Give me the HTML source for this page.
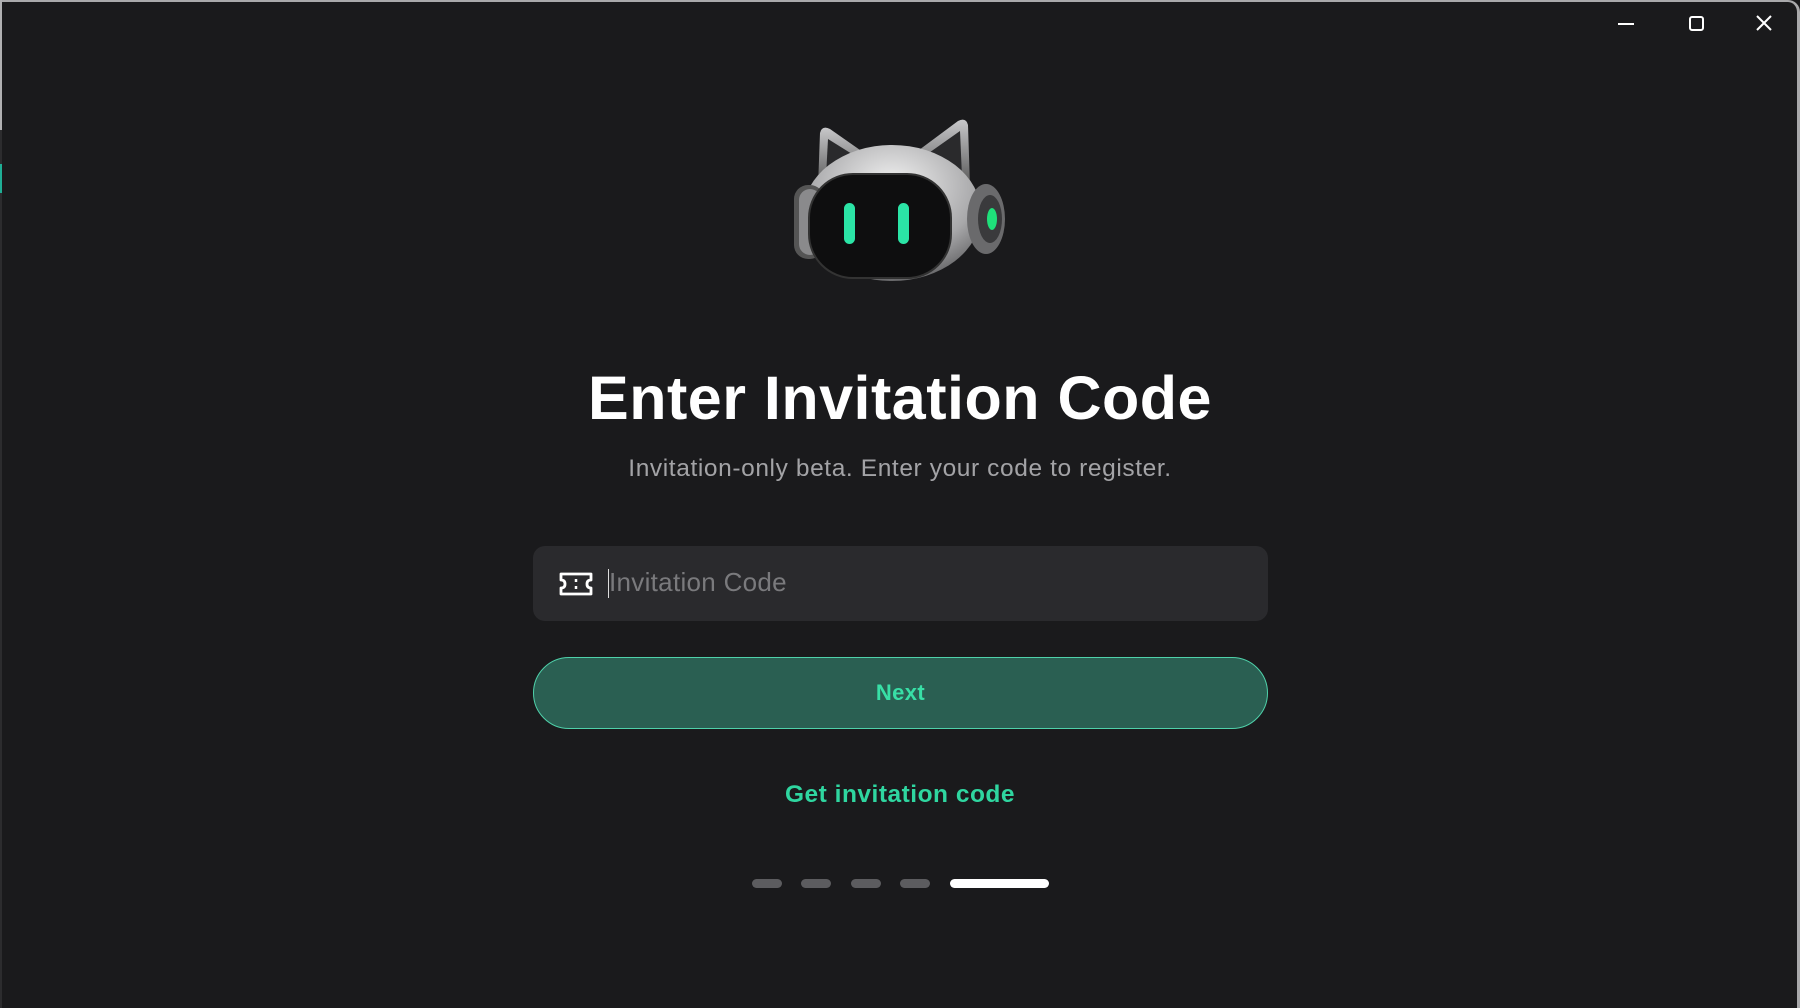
<!DOCTYPE html>
<html><head><meta charset="utf-8"><style>
*{margin:0;padding:0;box-sizing:border-box}
body{width:1800px;height:1008px;background:#1a1a1c;overflow:hidden;position:relative;font-family:"Liberation Sans",sans-serif}
.frame{position:absolute;inset:0;border-top:2px solid #a9a9ab;border-right:3px solid #a9a9ab;border-top-right-radius:12px}
.lstrip{position:absolute;left:0;top:0;width:2px;height:130px;background:#b0b0b2}
.lstrip2{position:absolute;left:0;top:130px;width:2px;height:878px;background:#2c2c2e}
.teal{position:absolute;left:0;top:164px;width:2px;height:29px;background:#1fae95}
h1{position:absolute;top:363px;left:0;width:1800px;text-align:center;color:#fff;font-size:61px;font-weight:bold;letter-spacing:0.5px}
.sub{position:absolute;top:455px;left:0;width:1800px;text-align:center;color:#a3a3a6;font-size:24.5px;letter-spacing:0.6px}
.inp{position:absolute;left:533px;top:546px;width:735px;height:75px;background:#2a2a2d;border-radius:12px}
.ph{position:absolute;left:609px;top:567px;color:#7a7a7d;font-size:26px;letter-spacing:0.3px}
.caret{position:absolute;left:608px;top:569px;width:1px;height:29px;background:#ddd}
.btn{position:absolute;left:533px;top:657px;width:735px;height:72px;background:#2a5f52;border:1.5px solid #4fd1aa;border-radius:36px;color:#38dfa6;font-weight:bold;font-size:22px;letter-spacing:0.4px;text-align:center;line-height:70px}
.link{position:absolute;top:781px;left:0;width:1800px;text-align:center;color:#2fd6a0;font-weight:bold;font-size:24.5px;letter-spacing:0.5px}
.dot{position:absolute;top:879px;height:9px;border-radius:5px;background:#5c5c5f}
</style></head><body>
<div class="frame"></div><div class="lstrip"></div><div class="lstrip2"></div><div class="teal"></div>
<svg style="position:absolute;left:1610px;top:10px" width="180" height="30">
<line x1="8" y1="14" x2="24" y2="14" stroke="#fff" stroke-width="2"/>
<rect x="80" y="7" width="13" height="13" rx="2" fill="none" stroke="#fff" stroke-width="2"/>
<path d="M147 6L161 20M161 6L147 20" stroke="#fff" stroke-width="2"/>
</svg>
<svg style="position:absolute;left:790px;top:115px" width="220" height="170" viewBox="0 0 220 170">
<defs>
<radialGradient id="h" cx="0.5" cy="0.3" r="0.8"><stop offset="0" stop-color="#f2f2f2"/><stop offset="0.6" stop-color="#a8a8aa"/><stop offset="1" stop-color="#4a4a4c"/></radialGradient>
<linearGradient id="e" x1="0" y1="0" x2="0" y2="1"><stop offset="0" stop-color="#c8c8ca"/><stop offset="1" stop-color="#555"/></linearGradient>
</defs>
<path d="M28 72 L30 18 Q32 10 40 14 L80 42 Z" fill="url(#e)"/>
<path d="M36 62 L38 24 L70 44 Z" fill="#2a2a2c"/>
<path d="M180 72 L178 10 Q176 2 168 6 L125 38 Z" fill="url(#e)"/>
<path d="M172 62 L170 16 L136 40 Z" fill="#2a2a2c"/>
<ellipse cx="102" cy="98" rx="89" ry="68" fill="url(#h)"/>
<rect x="4" y="70" width="30" height="74" rx="14" fill="#555"/>
<rect x="9" y="74" width="22" height="66" rx="11" fill="#8a8a8c"/>
<ellipse cx="196" cy="104" rx="19" ry="35" fill="#6a6a6c"/>
<ellipse cx="200" cy="104" rx="12" ry="24" fill="#3a3a3c"/>
<ellipse cx="202" cy="104" rx="5" ry="11" fill="#1fe07a"/>
<rect x="19" y="59" width="142" height="104" rx="44" fill="#0e0e0f" stroke="#333" stroke-width="2"/>
<rect x="54" y="88" width="11" height="41" rx="5.5" fill="#2be4a6"/>
<rect x="108" y="88" width="11" height="41" rx="5.5" fill="#2be4a6"/>
</svg>
<h1>Enter Invitation Code</h1>
<div class="sub">Invitation-only beta. Enter your code to register.</div>
<div class="inp"></div>
<svg style="position:absolute;left:558px;top:571px" width="36" height="26" viewBox="0 0 36 26">
<path d="M3 3H33V9Q29 9 29 13Q29 17 33 17V23H3V17Q7 17 7 13Q7 9 3 9Z" fill="none" stroke="#fff" stroke-width="2.8" stroke-linejoin="round"/>
<line x1="18" y1="8" x2="18" y2="11" stroke="#fff" stroke-width="2.5"/><line x1="18" y1="15" x2="18" y2="18" stroke="#fff" stroke-width="2.5"/>
</svg>
<div class="caret"></div><div class="ph">Invitation Code</div>
<div class="btn">Next</div>
<div class="link">Get invitation code</div>
<div class="dot" style="left:752px;width:30px"></div>
<div class="dot" style="left:801px;width:30px"></div>
<div class="dot" style="left:851px;width:30px"></div>
<div class="dot" style="left:900px;width:30px"></div>
<div class="dot" style="left:950px;width:99px;background:#fff"></div>
</body></html>
